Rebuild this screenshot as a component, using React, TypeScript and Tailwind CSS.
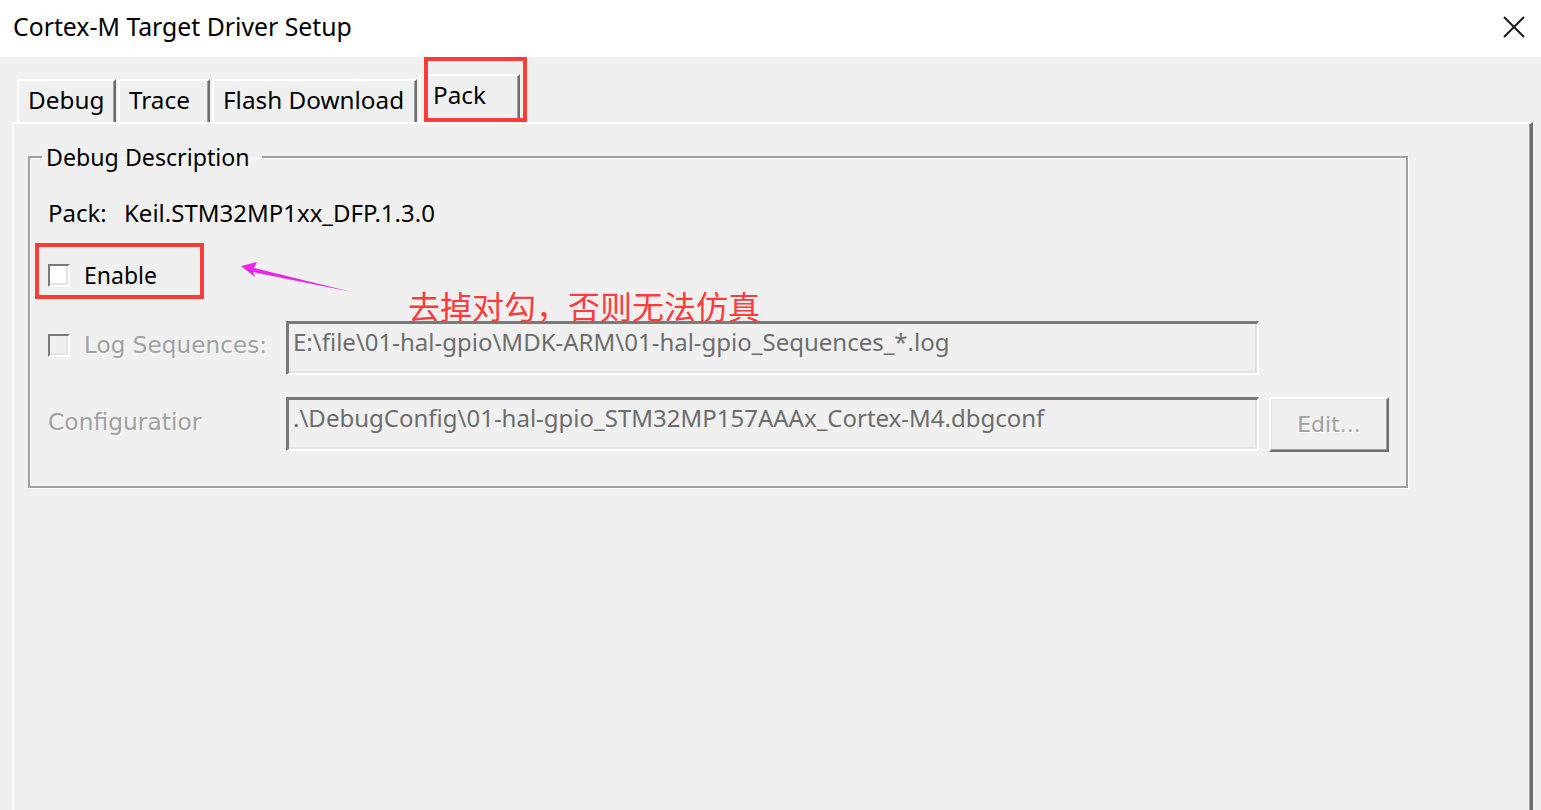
import React from "react";

const ui = { fontFamily: '"Noto Sans", "Open Sans", sans-serif' };
const dis = { fontFamily: '"DejaVu Sans", "Liberation Sans", sans-serif', textShadow: "1px 1px 0 #ffffff" };

function Tab({ label, w, ml }: { label: string; w: string; ml: string }) {
  return (
    <div
      className={`${w} ${ml} h-[43px] bg-[#f0f0f0] border-t-2 border-l-2 border-white border-r-2 border-r-[#6d6d6d] shadow-[inset_-1px_0_0_#a0a0a0] flex items-center pl-[9px] pb-[4px] text-[24.3px] leading-[30px] text-black`}
    >
      {label}
    </div>
  );
}

function Check({ disabled }: { disabled?: boolean }) {
  return (
    <div className="w-[22px] h-[23px] shrink-0 border-t-2 border-l-2 border-[#7a7a7a] border-b-2 border-r-2 border-b-white border-r-white">
      <div
        className={`w-full h-full ${disabled ? "bg-[#f0f0f0]" : "bg-white"} shadow-[inset_-2px_-2px_0_#e3e3e3]`}
      />
    </div>
  );
}

function Field({ text }: { text: string }) {
  return (
    <div className="w-[973px] h-[54px] shrink-0 bg-[#f0f0f0] border-t-[3px] border-l-[3px] border-[#7a7a7a] border-b-[2px] border-r-[2px] border-b-white border-r-white shadow-[inset_-2px_-2px_0_#e3e3e3] pl-[4px] pt-[3px] text-[24px] leading-[30px] text-[#6d6d6d] whitespace-nowrap overflow-hidden">
      {text}
    </div>
  );
}

export default function App() {
  return (
    <div className="relative w-[1541px] h-[810px] bg-[#f0f0f0] overflow-hidden flex flex-col" style={ui}>
      {/* Title bar */}
      <div className="h-[57px] shrink-0 bg-white flex items-center justify-between pl-[13px] pr-[16px]">
        <span className="text-[24.8px] leading-[30px] text-black pb-[5px]">Cortex-M Target Driver Setup</span>
        <svg width="22" height="22" viewBox="0 0 22 22" className="mb-[4px]">
          <path d="M1 1 L21 21 M21 1 L1 21" stroke="#1a1a1a" strokeWidth="2" fill="none" />
        </svg>
      </div>

      {/* Tabs */}
      <div className="h-[65px] shrink-0 flex items-end pl-[17px]">
        <Tab label="Debug" w="w-[99px]" ml="ml-0" />
        <Tab label="Trace" w="w-[92px]" ml="ml-[2px]" />
        <Tab label="Flash Download" w="w-[205px]" ml="ml-[2px]" />
        <div className="ml-[2px] w-[101px] h-[49px] mb-[-1px] bg-[#f0f0f0] border-t-2 border-l-2 border-white border-r-2 border-r-[#6d6d6d] shadow-[inset_-1px_0_0_#a0a0a0] flex items-start pl-[12px] pt-[4px] text-[24.3px] leading-[30px] text-black">
          Pack
        </div>
      </div>

      {/* Panel */}
      <div className="ml-[12px] w-[1521px] flex-1 border-t-2 border-l-2 border-white border-r-[3px] border-r-[#6d6d6d] shadow-[inset_-1px_0_0_#a0a0a0]">
        <fieldset className="ml-[14px] mt-[18px] w-[1380px] min-w-0 p-0 border-2 border-[#a0a0a0] shadow-[inset_1px_1px_0_#ffffff,1px_1px_0_#ffffff]">
          <legend className="ml-[12px] pl-[4px] pr-[12px] text-[23.2px] leading-[30px] text-black">Debug Description</legend>
          <div className="pl-[18px] pb-[34px] flex flex-col">
            <div className="mt-[26px] h-[30px] flex items-center text-[24px] leading-[30px] text-black">
              <span className="w-[76px]">Pack:</span>
              <span>Keil.STM32MP1xx_DFP.1.3.0</span>
            </div>
            <div className="mt-[32px] h-[30px] flex items-center">
              <Check />
              <span className="ml-[14px] text-[23px] leading-[30px] text-black">Enable</span>
            </div>
            <div className="mt-[31px] h-[54px] flex items-start">
              <div className="w-[238px] shrink-0 mt-[11px] flex items-center">
                <Check disabled />
                <span className="ml-[14px] text-[23.2px] leading-[26px] text-[#a0a0a0] whitespace-nowrap" style={dis}>
                  Log Sequences:
                </span>
              </div>
              <Field text="E:\file\01-hal-gpio\MDK-ARM\01-hal-gpio_Sequences_*.log" />
            </div>
            <div className="mt-[22px] h-[55px] flex items-start">
              <span className="w-[238px] shrink-0 mt-[12px] text-[23.4px] leading-[26px] text-[#a0a0a0] whitespace-nowrap" style={dis}>
                Configuratior
              </span>
              <Field text=".\DebugConfig\01-hal-gpio_STM32MP157AAAx_Cortex-M4.dbgconf" />
              <div className="ml-[10px] w-[120px] h-[55px] shrink-0 border-t-2 border-l-2 border-white border-b-2 border-r-2 border-b-[#6d6d6d] border-r-[#6d6d6d] shadow-[inset_-1px_-1px_0_#a0a0a0,inset_1px_1px_0_#e3e3e3] flex items-center justify-center text-[22px] leading-[26px] text-[#a0a0a0]" style={dis}>
                Edit...
              </div>
            </div>
          </div>
        </fieldset>
      </div>

      {/* Annotations */}
      <div className="absolute left-[424px] top-[57px] w-[103px] h-[65px] border-4 border-[#fb3a3a]" />
      <div className="absolute left-[35px] top-[243px] w-[169px] h-[56px] border-4 border-[#fb3a3a]" />
      <svg className="absolute left-0 top-0" width="1541" height="810" style={{ pointerEvents: "none" }}>
        <polygon points="241,266 257,262 254,268 352,292 253,272 255,277" fill="#ee22ee" />
      </svg>
      <div
        className="absolute left-[408px] top-[288px] text-[32px] leading-[34px] text-[#ff3b3b] whitespace-nowrap"
        style={{ fontFamily: '"Noto Sans CJK SC", "Noto Sans", sans-serif' }}
      >
        去掉对勾，否则无法仿真
      </div>
    </div>
  );
}
